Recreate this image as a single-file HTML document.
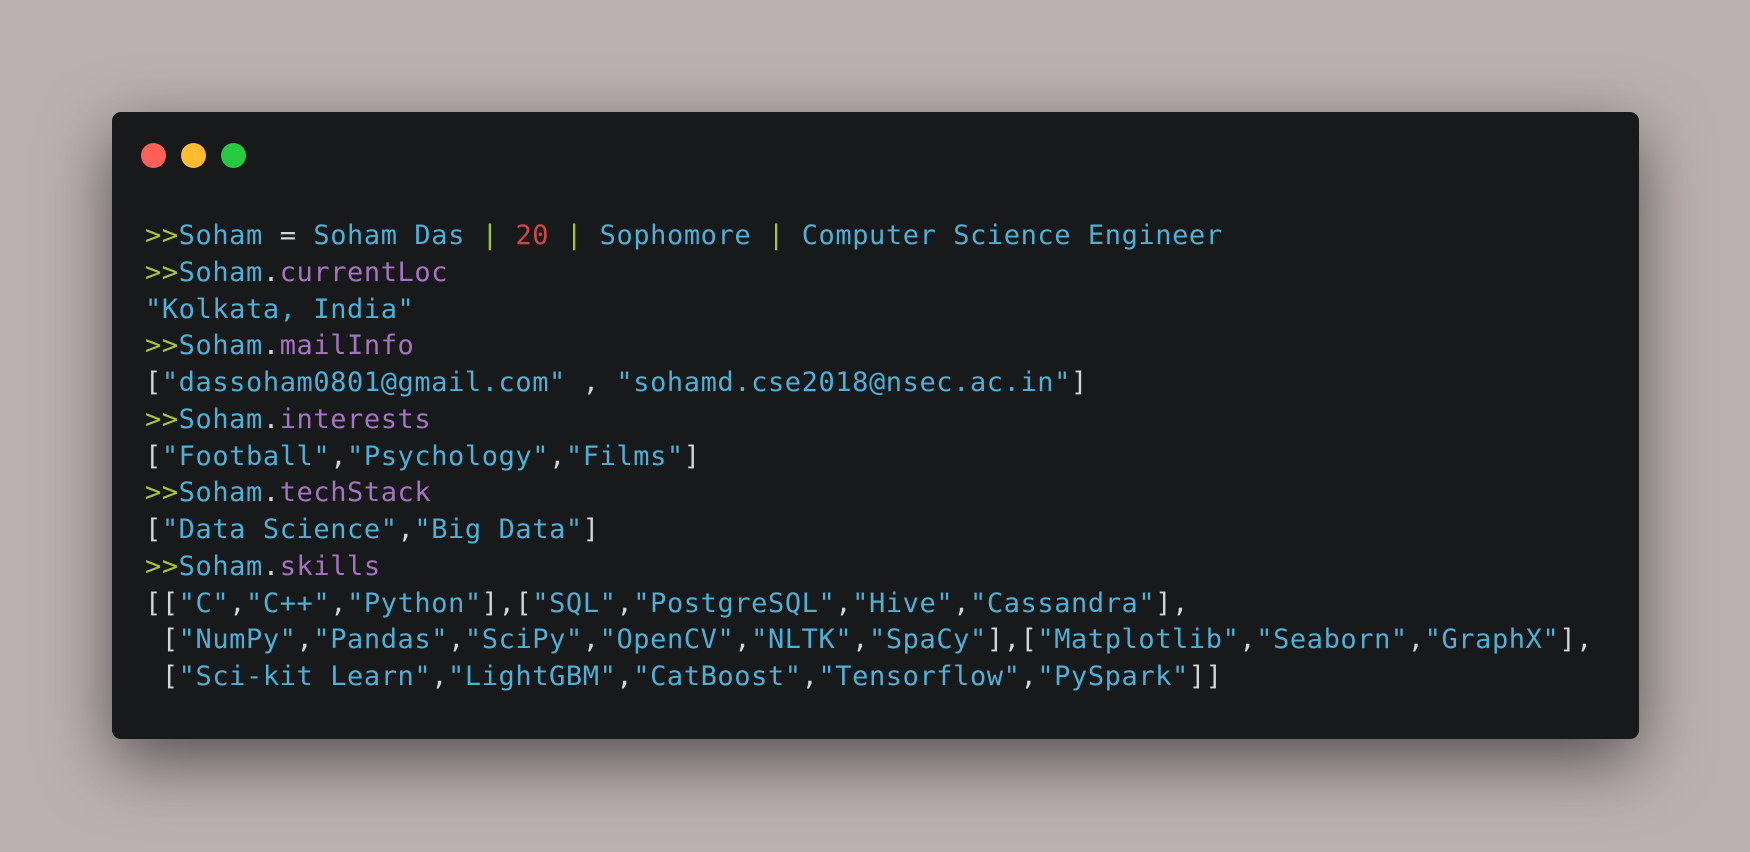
<!DOCTYPE html>
<html><head><meta charset="utf-8"><style>
html,body{margin:0;padding:0}
body{width:1750px;height:852px;background:#bcb1b1;position:relative;overflow:hidden}
.win{position:absolute;left:112px;top:112px;width:1527px;height:627px;background:#18191b;border-radius:9px;box-shadow:0 22px 68px rgba(0,0,0,0.55)}
.d{position:absolute;top:143px;width:25px;height:25px;border-radius:50%}
pre{position:absolute;left:145px;top:218px;margin:0;font-family:"DejaVu Sans Mono","Liberation Mono",monospace;font-size:27px;letter-spacing:0.58px;line-height:36.75px;color:#d4d4d4}
.g{color:#a4c639}.b{color:#4eb0d6}.p{color:#a672c2}.r{color:#d8434a}.w{color:#d4d4d4}
</style></head><body>
<div class="win"></div>
<div class="d" style="left:141px;background:#fe5f57"></div>
<div class="d" style="left:181px;background:#febc2e"></div>
<div class="d" style="left:221px;background:#28c840"></div>
<pre><span class="g">&gt;&gt;</span><span class="b">Soham</span> <span class="w">=</span> <span class="b">Soham Das</span> <span class="g">|</span> <span class="r">20</span> <span class="g">|</span> <span class="b">Sophomore</span> <span class="g">|</span> <span class="b">Computer Science Engineer</span>
<span class="g">&gt;&gt;</span><span class="b">Soham</span>.<span class="p">currentLoc</span>
<span class="b">"Kolkata, India"</span>
<span class="g">&gt;&gt;</span><span class="b">Soham</span>.<span class="p">mailInfo</span>
[<span class="b">"dassoham0801@gmail.com"</span> , <span class="b">"sohamd.cse2018@nsec.ac.in"</span>]
<span class="g">&gt;&gt;</span><span class="b">Soham</span>.<span class="p">interests</span>
[<span class="b">"Football"</span>,<span class="b">"Psychology"</span>,<span class="b">"Films"</span>]
<span class="g">&gt;&gt;</span><span class="b">Soham</span>.<span class="p">techStack</span>
[<span class="b">"Data Science"</span>,<span class="b">"Big Data"</span>]
<span class="g">&gt;&gt;</span><span class="b">Soham</span>.<span class="p">skills</span>
[[<span class="b">"C"</span>,<span class="b">"C++"</span>,<span class="b">"Python"</span>],[<span class="b">"SQL"</span>,<span class="b">"PostgreSQL"</span>,<span class="b">"Hive"</span>,<span class="b">"Cassandra"</span>],
 [<span class="b">"NumPy"</span>,<span class="b">"Pandas"</span>,<span class="b">"SciPy"</span>,<span class="b">"OpenCV"</span>,<span class="b">"NLTK"</span>,<span class="b">"SpaCy"</span>],[<span class="b">"Matplotlib"</span>,<span class="b">"Seaborn"</span>,<span class="b">"GraphX"</span>],
 [<span class="b">"Sci-kit Learn"</span>,<span class="b">"LightGBM"</span>,<span class="b">"CatBoost"</span>,<span class="b">"Tensorflow"</span>,<span class="b">"PySpark"</span>]]</pre>
</body></html>
